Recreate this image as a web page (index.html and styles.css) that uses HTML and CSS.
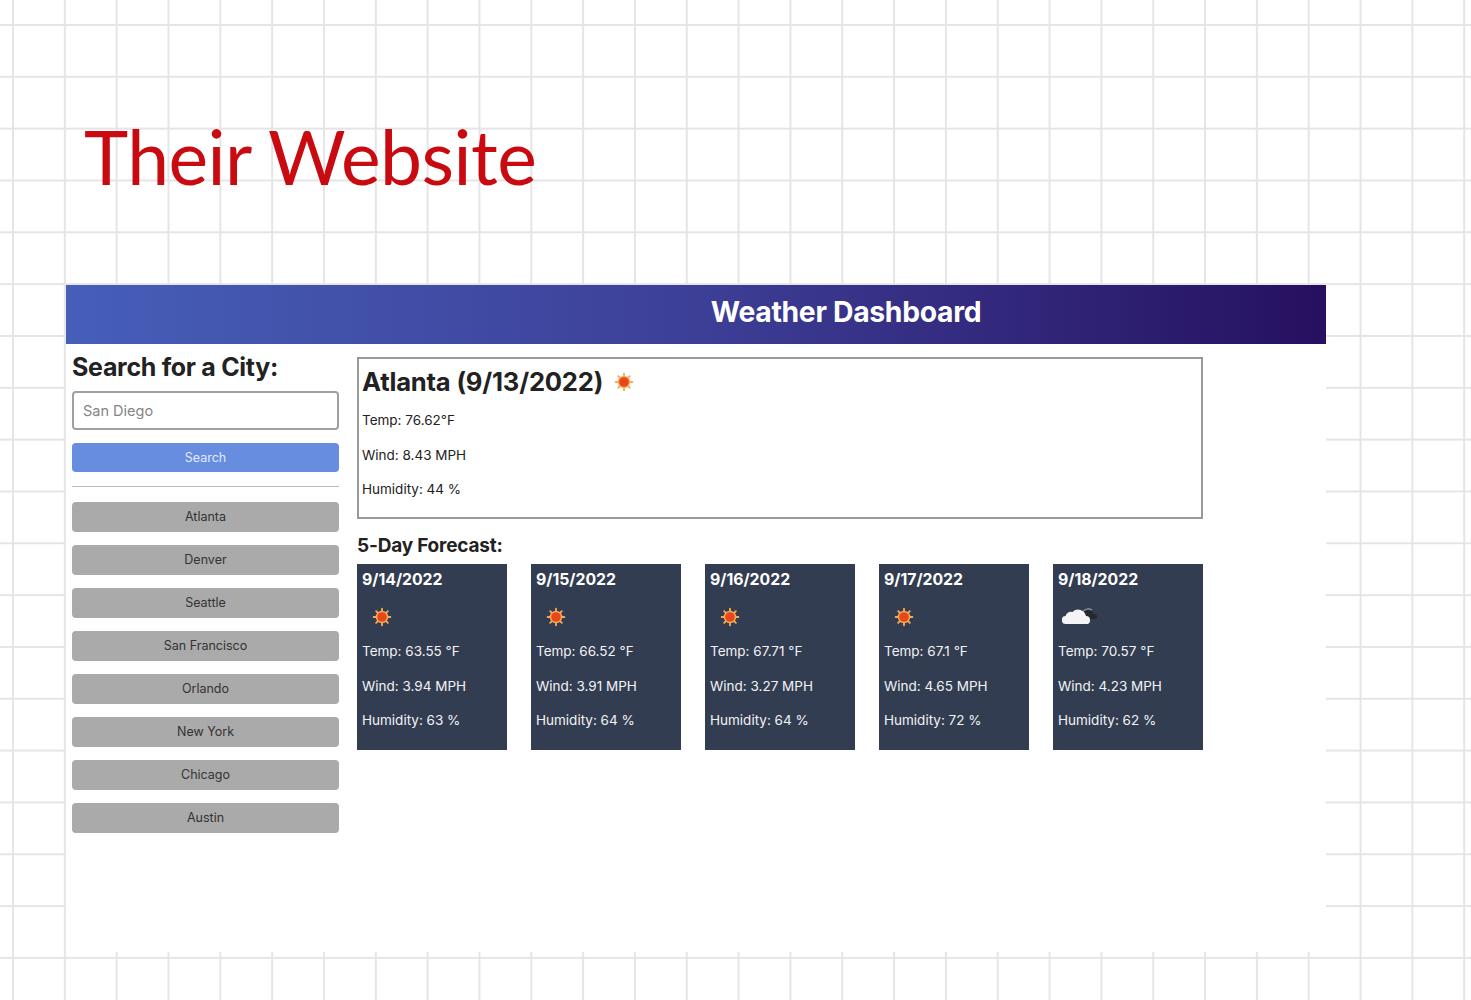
FILE: index.html
```html
<!DOCTYPE html>
<html lang="en">
<head>
  <meta charset="UTF-8" />
  <meta name="viewport" content="width=device-width, initial-scale=1.0"/>
  <title>Weather Dashboard</title>
  <link rel="stylesheet" href="styles.css">
</head>
<body>

  <svg class="defs" width="0" height="0">
    <symbol id="sun" viewBox="0 0 24 24">
      <g stroke="#f6ac55" stroke-width="2.200" stroke-linecap="round">
        <path d="M12 2v4M12 18v4M2 12h4M18 12h4M5 5l2.800 2.800M16.200 16.200l2.800 2.800M5 19l2.800-2.800M16.200 7.800l2.800-2.800"/>
      </g>
      <circle cx="12" cy="12" r="7.500" fill="#f6ac55"/>
      <circle cx="12" cy="12" r="5.800" fill="#e8471c"/>
    </symbol>
    <symbol id="cloud" viewBox="0 0 36 18">
      <path fill="#26282f" d="M19 8a7 7 0 0 1 13-1 2.500 2.500 0 0 1 3 3 2 2 0 0 1-2 2H24z"/>
      <path fill="none" stroke="#9a9da6" stroke-width="1.200" d="M20 6a7 7 0 0 1 10-3"/>
      <path fill="#f4f4f4" d="M4 17a4 4 0 0 1-.5-8 5.500 5.500 0 0 1 7-4A8 8 0 0 1 24 9a4 4 0 0 1 4 4 4 4 0 0 1-2 4z"/>
    </symbol>
  </svg>

  <div class="note">Their Website</div>

  <div class="sheet">
    <header class="banner">
      <h1>Weather Dashboard</h1>
    </header>

    <div class="content">
      <aside class="sidebar">
        <h2>Search for a City:</h2>
        <input class="city-input" placeholder="San Diego" />
        <button class="btn btn-search">Search</button>
        <hr />
        <div class="history">
          <button class="btn">Atlanta</button>
          <button class="btn">Denver</button>
          <button class="btn">Seattle</button>
          <button class="btn">San Francisco</button>
          <button class="btn">Orlando</button>
          <button class="btn">New York</button>
          <button class="btn">Chicago</button>
          <button class="btn">Austin</button>
        </div>
      </aside>

      <main class="main">
        <section class="today">
          <h2>Atlanta (9/13/2022) <svg class="today-icon"><use href="#sun"/></svg></h2>
          <div class="stats">
            <p>Temp: 76.62°F</p>
            <p>Wind: 8.43 MPH</p>
            <p>Humidity: 44 %</p>
          </div>
        </section>

        <h3>5-Day Forecast:</h3>
        <div class="cards">
          <div class="card">
            <h4>9/14/2022</h4>
            <svg class="icon"><use href="#sun"/></svg>
            <div class="stats">
              <p>Temp: 63.55 °F</p>
              <p>Wind: 3.94 MPH</p>
              <p>Humidity: 63 %</p>
            </div>
          </div>
          <div class="card">
            <h4>9/15/2022</h4>
            <svg class="icon"><use href="#sun"/></svg>
            <div class="stats">
              <p>Temp: 66.52 °F</p>
              <p>Wind: 3.91 MPH</p>
              <p>Humidity: 64 %</p>
            </div>
          </div>
          <div class="card">
            <h4>9/16/2022</h4>
            <svg class="icon"><use href="#sun"/></svg>
            <div class="stats">
              <p>Temp: 67.71 °F</p>
              <p>Wind: 3.27 MPH</p>
              <p>Humidity: 64 %</p>
            </div>
          </div>
          <div class="card">
            <h4>9/17/2022</h4>
            <svg class="icon"><use href="#sun"/></svg>
            <div class="stats">
              <p>Temp: 67.1 °F</p>
              <p>Wind: 4.65 MPH</p>
              <p>Humidity: 72 %</p>
            </div>
          </div>
          <div class="card">
            <h4>9/18/2022</h4>
            <svg class="icon-cloud"><use href="#cloud"/></svg>
            <div class="stats">
              <p>Temp: 70.57 °F</p>
              <p>Wind: 4.23 MPH</p>
              <p>Humidity: 62 %</p>
            </div>
          </div>
        </div>
      </main>
    </div>
  </div>

</body>
</html>
```

FILE: styles.css
```css
* {
  box-sizing: border-box;
}
body {
  margin: 0;
  height: 1000px;
  overflow: hidden;
  font-family: Inter, "Liberation Sans", sans-serif;
  color: #222;
  background-color: #fff;
  background-image:
    linear-gradient(to right, #e5e5e7 2px, transparent 2px),
    linear-gradient(to bottom, #e5e5e7 2px, transparent 2px);
  background-size: 51.83px 51.83px;
  background-position: 12px 24px;
}
.defs {
  display: block;
  height: 0;
}
.note {
  height: 285px;
  padding: 108px 0 0 84px;
  font-family: Lato, sans-serif;
  font-size: 75px;
  line-height: 96px;
  color: #c90a10;
  letter-spacing: -0.5px;
}
.sheet {
  margin-left: 66px;
  width: 1260px;
  height: 667px;
  background: #fff;
}
.banner {
  height: 59px;
  padding: 0 0 5px 300px;
  display: flex;
  align-items: center;
  justify-content: center;
  background: linear-gradient(to right, #465fb9, #3d3f97 50%, #26105f);
}
.banner h1 {
  margin: 0;
  font-size: 28.300px;
  font-weight: 700;
  letter-spacing: -0.3px;
  color: #fff;
}
.content {
  display: flex;
  gap: 18px;
  padding: 8px 6px;
}
.sidebar {
  width: 267px;
}
.sidebar h2 {
  margin: 0 0 9px;
  font-size: 25px;
  line-height: 30px;
  font-weight: 700;
  letter-spacing: -0.3px;
}
.city-input {
  display: block;
  width: 100%;
  height: 39px;
  padding: 0 9px;
  font-family: inherit;
  font-size: 14.500px;
  border: 2px solid #a0a0a0;
  border-radius: 4px;
}
.city-input::placeholder {
  color: #858585;
}
.btn {
  display: block;
  width: 100%;
  height: 30px;
  padding: 0 0 1px;
  font-family: inherit;
  font-size: 12.500px;
  color: #333;
  background: #aaa;
  border: none;
  border-radius: 4px;
}
.btn-search {
  height: 29px;
  margin-top: 13px;
  color: #e4eafa;
  background: #668de0;
}
.sidebar hr {
  height: 1px;
  margin: 14px 0 15px;
  background: #bbb;
  border: none;
}
.history {
  display: flex;
  flex-direction: column;
  gap: 13px;
}
.main {
  width: 846px;
  padding-top: 5px;
}
.today {
  height: 162px;
  padding: 4px 3px;
  border: 2px solid #999;
}
.today h2 {
  display: flex;
  align-items: center;
  gap: 11px;
  margin: 0 0 11px;
  height: 36px;
  font-size: 25.600px;
  font-weight: 700;
  letter-spacing: -0.2px;
}
.today-icon {
  width: 20px;
  height: 20px;
  margin-top: 2px;
}
.stats {
  display: flex;
  flex-direction: column;
  gap: 14.500px;
}
.stats p {
  margin: 0;
  font-size: 13.500px;
  line-height: 20px;
}
.main h3 {
  margin: 15px 0 6px;
  font-size: 19px;
  line-height: 24px;
  font-weight: 700;
  letter-spacing: -0.2px;
}
.cards {
  display: flex;
  justify-content: space-between;
}
.card {
  width: 150px;
  height: 186px;
  padding: 5px 5px;
  color: #f2f3f5;
  background: #333d51;
}
.card h4 {
  margin: 0 0 16px;
  font-size: 15.800px;
  line-height: 22px;
  font-weight: 700;
  color: #fff;
}
.icon {
  display: block;
  width: 20px;
  height: 20px;
  margin: 0 0 14px 10px;
}
.icon-cloud {
  display: block;
  width: 36px;
  height: 18px;
  margin: 1px 0 16px 4px;
}
```
